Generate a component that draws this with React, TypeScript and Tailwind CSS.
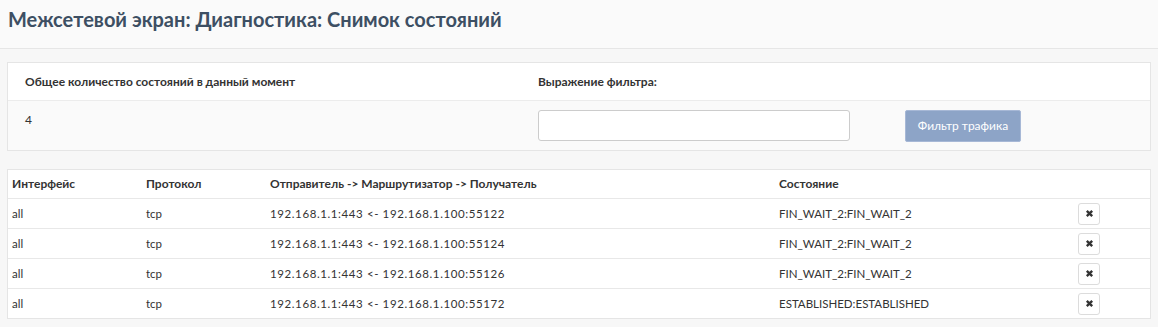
const rows = [
  { iface: "all", proto: "tcp", flow: "192.168.1.1:443 <- 192.168.1.100:55122", state: "FIN_WAIT_2:FIN_WAIT_2" },
  { iface: "all", proto: "tcp", flow: "192.168.1.1:443 <- 192.168.1.100:55124", state: "FIN_WAIT_2:FIN_WAIT_2" },
  { iface: "all", proto: "tcp", flow: "192.168.1.1:443 <- 192.168.1.100:55126", state: "FIN_WAIT_2:FIN_WAIT_2" },
  { iface: "all", proto: "tcp", flow: "192.168.1.1:443 <- 192.168.1.100:55172", state: "ESTABLISHED:ESTABLISHED" },
];

function KillButton() {
  return (
    <button className="flex h-[22px] w-[22px] items-center justify-center rounded-[3px] border border-[#dcdcdc] bg-white">
      <svg width="9" height="9" viewBox="0 0 10 10">
        <path d="M2 2 L8 8 M8 2 L2 8" stroke="#333" strokeWidth="2.6" strokeLinecap="butt" />
      </svg>
    </button>
  );
}

export default function App() {
  return (
    <div className="h-[327px] w-[1158px] bg-[#f7f7f7] text-[12px] text-[#333] [font-family:Lato,'Noto_Sans',sans-serif]">
      <div className="h-[49px] border-b border-[#e6e6e6] bg-[#fafafa] pl-[8px] pt-[5px]">
        <h1 className="text-[20px] font-bold leading-[28px] text-[#3d4f63]">
          Межсетевой экран: Диагностика: Снимок состояний
        </h1>
      </div>

      <div className="mx-[7px] mt-[13px] border border-[#e5e5e5]">
        <div className="flex h-[37px] items-center bg-white text-[12px] font-bold">
          <div className="w-[530px] pl-[17px]">Общее количество состояний в данный момент</div>
          <div>Выражение фильтра:</div>
        </div>
        <div className="flex h-[50px] border-t border-[#ececec] bg-[#fafafa]">
          <div className="w-[530px] pl-[17px] pt-[10px]">4</div>
          <div className="pt-[9px]">
            <input className="h-[31px] w-[312px] rounded-[3px] border border-[#cccccc] bg-white" />
          </div>
          <div className="pl-[55px] pt-[9px]">
            <button className="h-[32px] w-[116px] rounded-[2px] border border-[#a7b8d6] bg-[#8da4c7] text-[12px] font-normal text-white">
              Фильтр трафика
            </button>
          </div>
        </div>
      </div>

      <div className="mx-[7px] mt-[18px] border border-[#e5e5e5] bg-white">
        <div className="flex h-[28px] items-center text-[12px] font-bold">
          <div className="w-[138px] pl-[4px]">Интерфейс</div>
          <div className="w-[124px]">Протокол</div>
          <div className="w-[509px]">Отправитель -&gt; Маршрутизатор -&gt; Получатель</div>
          <div>Состояние</div>
        </div>
        {rows.map((r, i) => (
          <div key={i} className="flex h-[30px] items-center border-t border-[#e8e8e8] text-[11.5px]">
            <div className="w-[138px] pl-[4px]">{r.iface}</div>
            <div className="w-[124px]">{r.proto}</div>
            <div className="w-[509px] tracking-[0.6px]">{r.flow}</div>
            <div className="w-[299px]">{r.state}</div>
            <KillButton />
          </div>
        ))}
      </div>
    </div>
  );
}
